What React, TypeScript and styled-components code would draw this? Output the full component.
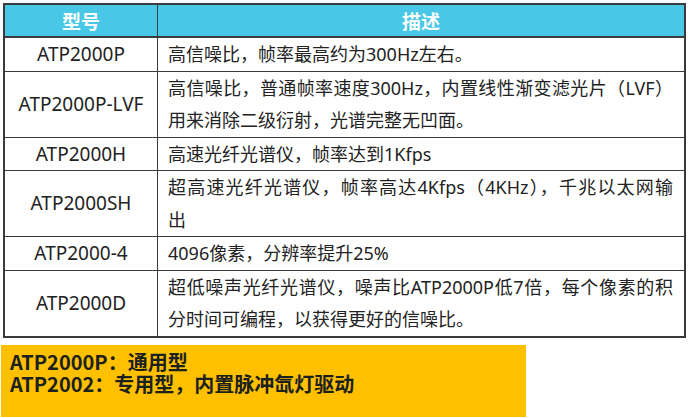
import React from 'react';
import styled, { createGlobalStyle } from 'styled-components';

const GlobalStyle = createGlobalStyle`
    html, body {
        margin: 0;
        padding: 0;
        background: #ffffff;
    }
    body {
        font-family: "Noto Sans CJK SC", sans-serif;
    }
`;

const Page = styled.div`
    width: 688px;
    height: 418px;
    padding: 3px 0 0 0;
    box-sizing: border-box;
    overflow: hidden;
`;

const Table = styled.table`
    margin-left: 3px;
    width: 683px;
    border-collapse: collapse;
    border: 2px solid #3a3a3a;
    table-layout: fixed;
    color: #222;
`;

const HeadCell = styled.th<{ $w?: number }>`
    width: ${p => (p.$w ? `${p.$w}px` : 'auto')};
    padding: 0;
    background: #48c8e6;
    color: #ffffff;
    font-family: "Noto Sans CJK SC", sans-serif;
    font-weight: 700;
    font-size: 19px;
    line-height: 31px;
    text-align: center;
    border: 1px solid #3a3a3a;
    border-bottom-width: 2px;
`;

const ModelCell = styled.td`
    padding: 0 2px;
    font-family: "Noto Sans", "Noto Sans CJK SC", sans-serif;
    font-size: 19px;
    text-align: center;
    vertical-align: middle;
    border: 1px solid #3a3a3a;
    line-height: 32.5px;
    white-space: nowrap;
`;

const DescCell = styled.td`
    padding: 0 11px 0 10px;
    font-family: "Noto Sans", "Noto Sans CJK SC", sans-serif;
    font-size: 18px;
    vertical-align: middle;
    border: 1px solid #3a3a3a;
    line-height: 32.5px;
`;

const Line = styled.div<{ $fill: boolean }>`
    white-space: nowrap;
    text-align: ${p => (p.$fill ? 'justify' : 'left')};
    text-align-last: ${p => (p.$fill ? 'justify' : 'left')};
    text-justify: inter-character;
`;

const Note = styled.div`
    margin: 7px 0 0 1px;
    width: 525px;
    height: 72px;
    padding: 6px 0 0 9px;
    box-sizing: border-box;
    background: #ffc000;
    color: #1b211c;
    font-family: "Noto Sans CJK SC", sans-serif;
    font-weight: 700;
    font-size: 20px;
    line-height: 22px;
`;

const rows = [
    { model: 'ATP2000P', lines: ['高信噪比，帧率最高约为300Hz左右。'] },
    { model: 'ATP2000P-LVF', lines: ['高信噪比，普通帧率速度300Hz，内置线性渐变滤光片（LVF）', '用来消除二级衍射，光谱完整无凹面。'] },
    { model: 'ATP2000H', lines: ['高速光纤光谱仪，帧率达到1Kfps'] },
    { model: 'ATP2000SH', lines: ['超高速光纤光谱仪，帧率高达4Kfps（4KHz），千兆以太网输', '出'] },
    { model: 'ATP2000-4', lines: ['4096像素，分辨率提升25%'] },
    { model: 'ATP2000D', lines: ['超低噪声光纤光谱仪，噪声比ATP2000P低7倍，每个像素的积', '分时间可编程，以获得更好的信噪比。'] },
];

export default function App() {
    return (
        <Page>
            <GlobalStyle />
            <Table>
                <thead>
                    <tr>
                        <HeadCell $w={152}>型号</HeadCell>
                        <HeadCell>描述</HeadCell>
                    </tr>
                </thead>
                <tbody>
                    {rows.map(row => (
                        <tr key={row.model}>
                            <ModelCell>{row.model}</ModelCell>
                            <DescCell>
                                {row.lines.map((text, i) => (
                                    <Line key={i} $fill={i < row.lines.length - 1}>{text}</Line>
                                ))}
                            </DescCell>
                        </tr>
                    ))}
                </tbody>
            </Table>
            <Note>
                <div>ATP2000P：通用型</div>
                <div>ATP2002：专用型，内置脉冲氙灯驱动</div>
            </Note>
        </Page>
    );
}
